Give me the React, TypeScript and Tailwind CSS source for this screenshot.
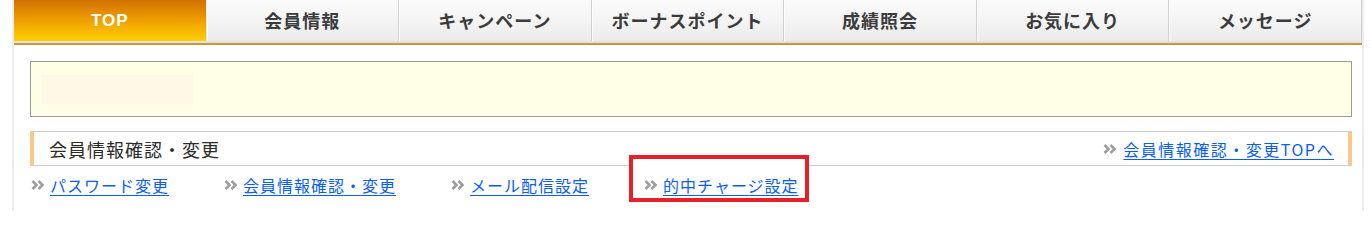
import React from "react";

const tabs = ["TOP", "会員情報", "キャンペーン", "ボーナスポイント", "成績照会", "お気に入り", "メッセージ"];

const links = [
    { label: "パスワード変更" },
    { label: "会員情報確認・変更" },
    { label: "メール配信設定" },
    { label: "的中チャージ設定", marked: true },
];

const font = "font-['Noto_Sans_CJK_JP','Noto_Sans',sans-serif]";

function Chevrons() {
    return (
        <svg width="14" height="12" viewBox="0 0 14 12" className="shrink-0">
            <path d="M1.5 2 L5.5 6 L1.5 10" fill="none" stroke="#9e9e9e" strokeWidth="2.6" />
            <path d="M7.5 2 L11.5 6 L7.5 10" fill="none" stroke="#9e9e9e" strokeWidth="2.6" />
        </svg>
    );
}

function NavTab({ label, active }: { label: string; active: boolean }) {
    if (active) {
        return (
            <div className="h-[41px] flex items-center justify-center bg-gradient-to-b from-[#d27000] via-[#eea000] to-[#ffd000] border-r border-[#e6e6e6]">
                <span className="text-white text-[17px] font-bold tracking-[1px] font-['Liberation_Sans',sans-serif]">{label}</span>
            </div>
        );
    }
    return (
        <div className="h-[41px] flex items-center justify-center bg-gradient-to-b from-[#fbfbfb] via-[#f4f4f4] to-[#ebebeb] border-r border-[#d0d0d0] shadow-[inset_1px_0_0_#ffffff]">
            <span className={`text-[#3c3c3c] text-[18px] font-bold tracking-[1px] ${font}`}>{label}</span>
        </div>
    );
}

export default function App() {
    return (
        <div className="w-[1371px] h-[211px] bg-white overflow-hidden">
            <div className="ml-[12px] w-[1352px] h-[211px] border-x-2 border-[#ececec]">
                <nav className="grid grid-cols-7 border-b-2 border-[#c8963c]">
                    {tabs.map((t, i) => (
                        <NavTab key={t} label={t} active={i === 0} />
                    ))}
                    <div className="col-span-7 h-[2px] bg-[#e2e2e2]" />
                </nav>

                <div className="pl-4 pr-[10px] pt-[16px]">
                    <div className="h-[56px] border border-[#9a9a9a] bg-[#ffffe6] flex items-center pl-[10px]">
                        <div className="w-[152px] h-[29px] bg-[#fff8e6]" />
                    </div>

                    <div className={`mt-[14px] h-[35px] flex items-center justify-between border-y border-[#cccccc] border-x-4 border-x-[#fac88c] pl-[15px] pr-[14px] ${font}`}>
                        <span className="text-[18px] text-[#2a2a2a] tracking-[1px] leading-none">会員情報確認・変更</span>
                        <a href="#" className="flex items-center gap-[6px] text-[16px] text-[#0a5ef5] leading-none">
                            <Chevrons />
                            <span className="underline underline-offset-[3px] tracking-[1.5px]">会員情報確認・変更TOPへ</span>
                        </a>
                    </div>

                    <div className={`flex items-center h-[38px] pl-px ${font}`}>
                        {links.map((l) => (
                            <div key={l.label} className="relative mr-[55px] flex items-center">
                                {l.marked && (
                                    <span className="absolute left-[-15px] right-[-10px] top-[-22px] bottom-[-9px] border-4 border-[#e8202a] bg-white" />
                                )}
                                <a href="#" className="relative flex items-center gap-[5px] text-[16px] text-[#0a5ef5] tracking-[1px] leading-none">
                                    <Chevrons />
                                    <span className="underline underline-offset-[3px]">{l.label}</span>
                                </a>
                            </div>
                        ))}
                    </div>
                </div>
            </div>
        </div>
    );
}
